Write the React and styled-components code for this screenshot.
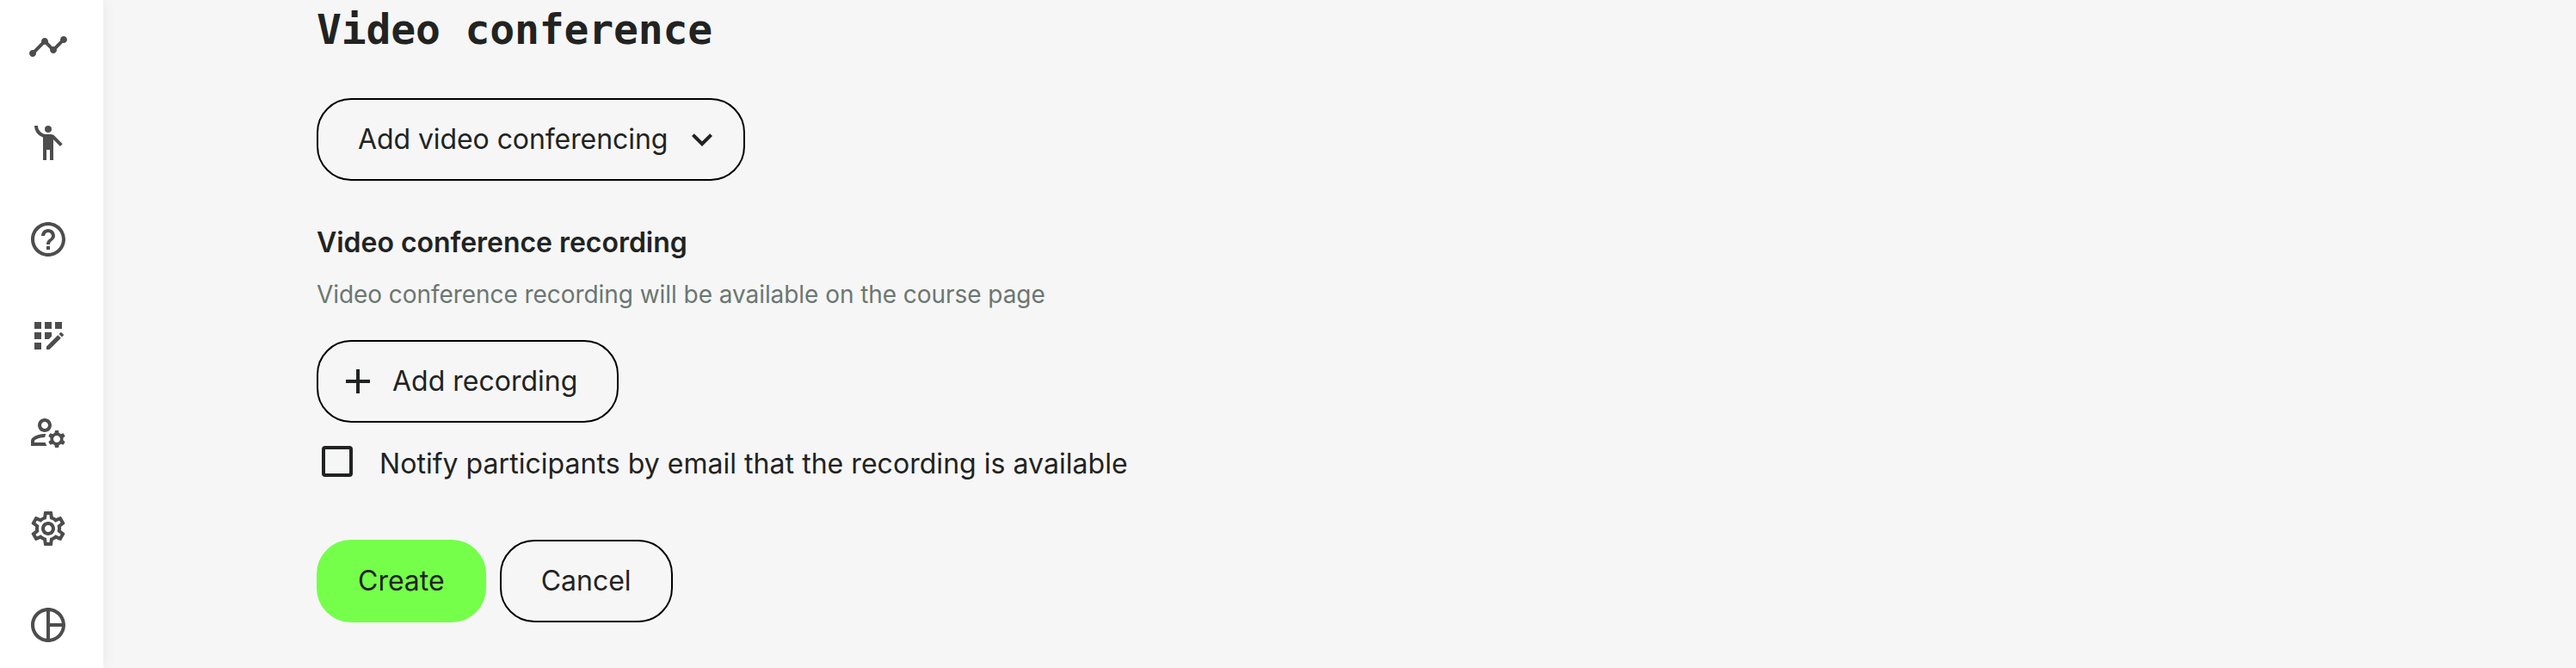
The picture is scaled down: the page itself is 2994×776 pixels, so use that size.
import React from "react"
import styled, { createGlobalStyle } from "styled-components"
import {
  MdAdd,
  MdExpandMore,
  MdTimeline,
  MdEmojiPeople,
  MdHelpOutline,
  MdAppRegistration,
  MdOutlineManageAccounts,
  MdOutlineSettings,
  MdOutlinePieChart,
} from "react-icons/md"

const GlobalStyle = createGlobalStyle`
  * {
    box-sizing: border-box;
  }

  body {
    margin: 0;
    background-color: #f6f6f6;
    color: #212322;
    font-family: Inter, "Liberation Sans", sans-serif;
    font-size: 32px;
    line-height: 48px;
    overflow: hidden;
  }
`

const Page = styled.div`
  display: flex;
  height: 776px;
`

const Sidebar = styled.nav`
  display: flex;
  flex-direction: column;
  flex: none;
  gap: 64px;
  width: 120px;
  padding: 30px 32px 0;
  background-color: #fff;
  box-shadow: 0 0 16px rgba(0, 0, 0, 0.06);
  overflow: hidden;
`

const NavItem = styled.a`
  flex: none;
  width: 48px;
  height: 48px;
  color: #4d4d4d;

  svg {
    display: block;
    width: 48px;
    height: 48px;
  }
`

const Form = styled.main`
  display: flex;
  flex-direction: column;
  align-items: flex-start;
  padding-left: 248px;
`

const Title = styled.h1`
  margin: 2px 0 48px;
  font-family: "DejaVu Sans Mono", monospace;
  font-size: 48px;
  font-weight: 700;
  line-height: 64px;
  letter-spacing: -0.15px;
`

const Button = styled.button`
  display: inline-flex;
  align-items: center;
  gap: 16px;
  height: 96px;
  padding: ${props => props.$padding || "0 46px"};
  border: 2px solid ${props => (props.$primary ? "#75ff4b" : "#000")};
  border-radius: 40px;
  background-color: ${props => (props.$primary ? "#75ff4b" : "transparent")};
  color: #212322;
  font: inherit;
  letter-spacing: ${props => props.$spacing || "normal"};
  white-space: nowrap;

  svg {
    flex: none;
    width: 48px;
    height: 48px;
  }
`

const Subtitle = styled.h2`
  margin: 48px 0 0;
  font-size: 32px;
  font-weight: 600;
  line-height: 48px;
  letter-spacing: -0.03px;
`

const Hint = styled.p`
  margin: 16px 0 33px;
  color: #6b7672;
  font-size: 28px;
  line-height: 40px;
  letter-spacing: -0.06px;
`

const Checkbox = styled.label`
  display: flex;
  gap: 31px;
  padding-top: 24px;
  letter-spacing: 0.04px;

  span {
    width: 36px;
    height: 36px;
    margin: 3px 0 0 6px;
    border: 4px solid #212322;
    border-radius: 4px;
  }
`

const Actions = styled.div`
  display: flex;
  gap: 16px;
  margin-top: 64px;
`

const navIcons = [
  MdTimeline,
  MdEmojiPeople,
  MdHelpOutline,
  MdAppRegistration,
  MdOutlineManageAccounts,
  MdOutlineSettings,
  MdOutlinePieChart,
]

export default function App() {
  return (
    <Page>
      <GlobalStyle />
      <Sidebar>
        {navIcons.map((Icon, index) => (
          <NavItem key={index}>
            <Icon />
          </NavItem>
        ))}
      </Sidebar>
      <Form>
        <Title>Video conference</Title>
        <Button $padding="0 24px 0 46px" $spacing="-0.08px">
          Add video conferencing
          <MdExpandMore />
        </Button>
        <Subtitle>Video conference recording</Subtitle>
        <Hint>Video conference recording will be available on the course page</Hint>
        <Button $padding="0 46px 0 22px">
          <MdAdd />
          Add recording
        </Button>
        <Checkbox>
          <span />
          Notify participants by email that the recording is available
        </Checkbox>
        <Actions>
          <Button $primary>Create</Button>
          <Button>Cancel</Button>
        </Actions>
      </Form>
    </Page>
  )
}
